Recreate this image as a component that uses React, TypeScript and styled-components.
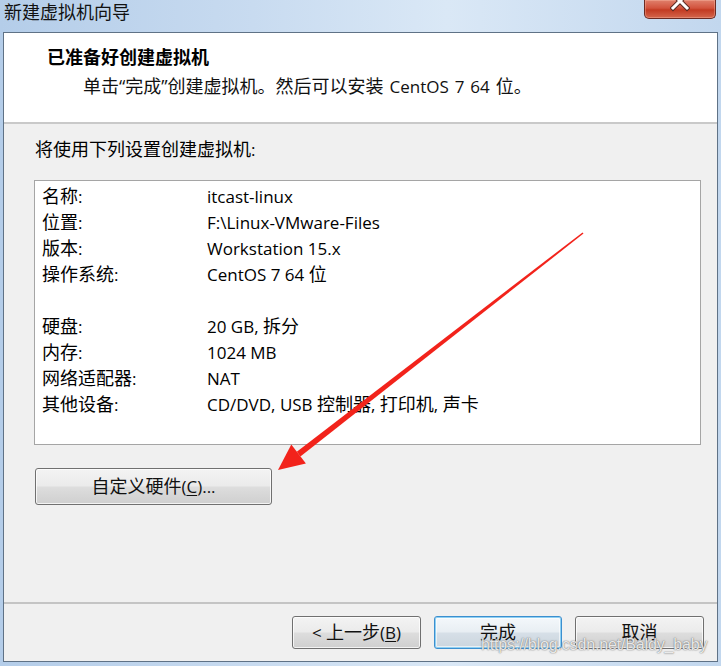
import React from "react";
import styled, { createGlobalStyle } from "styled-components";

const GlobalStyle = createGlobalStyle`
  html, body { margin: 0; padding: 0; background: #c9dcf1; }
  body { font-family: "Open Sans", "Noto Sans CJK SC", sans-serif; color: #000; }
  * { box-sizing: border-box; }
`;

const Window = styled.div`
  position: relative;
  width: 721px;
  height: 666px;
  display: flex;
  flex-direction: column;
  padding: 0 3px 4px 3px;
  background: linear-gradient(to right, #b4cde9 0%, #c8dbf0 35%, #dae8f6 62%, #c2d7ee 100%);
  overflow: hidden;
`;

const TitleBar = styled.div`
  height: 32px;
  display: flex;
  justify-content: space-between;
  align-items: flex-start;
`;

const TitleText = styled.div`
  padding-left: 1px;
  font-size: 17px;
  line-height: 26px;
  color: #111;
`;

const CloseButton = styled.div`
  width: 72px;
  height: 19px;
  margin-right: 2px;
  border: 1px solid #6b2a22;
  border-top: none;
  border-radius: 0 0 5px 5px;
  background: linear-gradient(to bottom, #e0806c 0%, #d2533d 45%, #c23a22 55%, #d4664c 100%);
  box-shadow: inset 0 0 0 1px rgba(255, 200, 180, 0.35);
  display: flex;
  justify-content: center;
  overflow: hidden;
`;

const Client = styled.div`
  flex: 1;
  display: flex;
  flex-direction: column;
  border: 1px solid #5f7286;
  background: #f0f0f0;
`;

const Header = styled.div`
  height: 91px;
  background: #fff;
  border-bottom: 2px solid #c9c9c9;
  padding: 12px 0 0 43px;
`;

const HeaderTitle = styled.div`
  font-size: 17px;
  font-weight: 700;
  line-height: 26px;
`;

const HeaderSub = styled.div`
  margin-top: 3px;
  padding-left: 36px;
  font-size: 17px;
  line-height: 26px;
  color: #111;
  word-spacing: 1.5px;
`;

const Han = styled.span`
  font-size: 18px;
  line-height: 1;
`;

const Body = styled.div`
  flex: 1;
  padding: 13px 0 0 30px;
  display: flex;
  flex-direction: column;
  align-items: flex-start;
`;

const Intro = styled.div`
  font-size: 17px;
  line-height: 26px;
  padding-left: 1px;
`;

const ListBox = styled.div`
  margin-top: 17px;
  width: 667px;
  height: 265px;
  background: #fff;
  border: 1px solid #a5a5a5;
  padding: 3px 0 0 7px;
  display: grid;
  grid-template-columns: 165px 1fr;
  grid-auto-rows: 26px;
  align-content: start;
  font-size: 17px;
`;

const Cell = styled.div`
  line-height: 26px;
  white-space: nowrap;
`;

const Spacer = styled.div`
  grid-column: 1 / span 2;
`;

const Button = styled.button<{ $focused?: boolean; $w: number; $h: number }>`
  width: ${(p) => p.$w}px;
  height: ${(p) => p.$h}px;
  font-family: "Open Sans", "Noto Sans CJK SC", sans-serif;
  font-size: 17px;
  color: #111;
  border-radius: 3px;
  padding: 0;
  border: 1px solid ${(p) => (p.$focused ? "#3c8fcf" : "#707070")};
  background: ${(p) =>
    p.$focused
      ? "linear-gradient(to bottom, #f4f8fb 0%, #e8eef3 48%, #d6dfe7 52%, #cbd5de 100%)"
      : "linear-gradient(to bottom, #f3f3f3 0%, #ebebeb 48%, #dddddd 52%, #cfcfcf 100%)"};
  box-shadow: ${(p) =>
    p.$focused
      ? "inset 0 0 0 1px #8fd0f3, inset 0 0 0 2px rgba(255,255,255,0.6)"
      : "inset 0 0 0 1px rgba(255,255,255,0.75)"};
  display: flex;
  align-items: center;
  justify-content: center;
`;

const ButtonLabel = styled.span`
  line-height: 20px;
  white-space: pre;
`;

const CustomButtonWrap = styled.div`
  margin-top: 23px;
  padding-left: 1px;
`;

const Mnemonic = styled.span`
  text-decoration: underline;
  text-underline-offset: 2px;
`;

const Footer = styled.div`
  border-top: 2px solid #c4c4c4;
  padding: 12px 13px 12px 0;
  display: flex;
  justify-content: flex-end;
  gap: 13px;
`;

const Watermark = styled.div`
  position: absolute;
  left: 481px;
  top: 636px;
  font-family: "Liberation Sans", Arial, sans-serif;
  font-size: 16px;
  letter-spacing: -0.15px;
  color: rgba(255, 255, 255, 0.85);
  text-shadow: 0 0 1px rgba(90, 90, 90, 0.9), 0 0 2px rgba(120, 120, 120, 0.6);
  pointer-events: none;
`;

const Overlay = styled.svg`
  position: absolute;
  left: 0;
  top: 0;
  pointer-events: none;
`;

const hanRe = /([\u3000-\u303f\u4e00-\u9fff\uff00-\uffef\u201c\u201d]+)/;

function Mixed({ text }: { text: string }) {
  const parts = text.split(hanRe);
  return (
    <>
      {parts.map((p, i) =>
        p === "" ? null : hanRe.test(p) ? <Han key={i}>{p}</Han> : <React.Fragment key={i}>{p}</React.Fragment>
      )}
    </>
  );
}

const rows1: [string, string][] = [
  ["名称:", "itcast-linux"],
  ["位置:", "F:\\Linux-VMware-Files"],
  ["版本:", "Workstation 15.x"],
  ["操作系统:", "CentOS 7 64 位"],
];
const rows2: [string, string][] = [
  ["硬盘:", "20 GB, 拆分"],
  ["内存:", "1024 MB"],
  ["网络适配器:", "NAT"],
  ["其他设备:", "CD/DVD, USB 控制器, 打印机, 声卡"],
];

export default function App() {
  return (
    <>
      <GlobalStyle />
      <Window>
        <TitleBar>
          <TitleText>
            <Mixed text="新建虚拟机向导" />
          </TitleText>
          <CloseButton>
            <svg width="20" height="18" viewBox="0 0 20 18">
              <path d="M3 -6 L17 8 M17 -6 L3 8" stroke="#5a2a22" strokeWidth="5" strokeLinecap="square" />
              <path d="M3 -6 L17 8 M17 -6 L3 8" stroke="#ffffff" strokeWidth="3" strokeLinecap="square" />
            </svg>
          </CloseButton>
        </TitleBar>
        <Client>
          <Header>
            <HeaderTitle>
              <Mixed text="已准备好创建虚拟机" />
            </HeaderTitle>
            <HeaderSub>
              <Mixed text="单击“完成”创建虚拟机。然后可以安装 CentOS 7 64 位。" />
            </HeaderSub>
          </Header>
          <Body>
            <Intro>
              <Mixed text="将使用下列设置创建虚拟机:" />
            </Intro>
            <ListBox>
              {rows1.map(([k, v]) => (
                <React.Fragment key={k}>
                  <Cell>
                    <Mixed text={k} />
                  </Cell>
                  <Cell>
                    <Mixed text={v} />
                  </Cell>
                </React.Fragment>
              ))}
              <Spacer />
              {rows2.map(([k, v]) => (
                <React.Fragment key={k}>
                  <Cell>
                    <Mixed text={k} />
                  </Cell>
                  <Cell>
                    <Mixed text={v} />
                  </Cell>
                </React.Fragment>
              ))}
            </ListBox>
            <CustomButtonWrap>
              <Button $w={237} $h={37}>
                <ButtonLabel>
                  <Han>自定义硬件</Han>(<Mnemonic>C</Mnemonic>)...
                </ButtonLabel>
              </Button>
            </CustomButtonWrap>
          </Body>
          <Footer>
            <Button $w={129} $h={33}>
              <ButtonLabel>
                {"< "}
                <Han>上一步</Han>(<Mnemonic>B</Mnemonic>)
              </ButtonLabel>
            </Button>
            <Button $w={128} $h={33} $focused>
              <ButtonLabel>
                <Han>完成</Han>
              </ButtonLabel>
            </Button>
            <Button $w={129} $h={33}>
              <ButtonLabel>
                <Han>取消</Han>
              </ButtonLabel>
            </Button>
          </Footer>
        </Client>
        <Watermark>https://blog.csdn.net/Baldy_baby</Watermark>
        <Overlay width="721" height="666" viewBox="0 0 721 666">
          <polygon points="582.5,232.4 583.5,233.6 300.4,456.5 296.8,451.7" fill="#f2231b" />
          <polygon points="278,470 291.3,444.6 305.9,463.6" fill="#f2231b" />
        </Overlay>
      </Window>
    </>
  );
}
